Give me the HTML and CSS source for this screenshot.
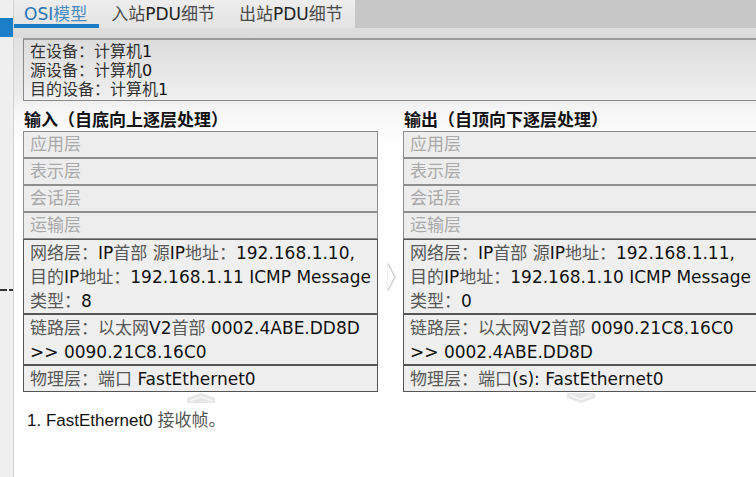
FILE: index.html
```html
<!DOCTYPE html>
<html lang="zh-CN">
<head>
<meta charset="utf-8">
<title>OSI模型</title>
<link rel="stylesheet" href="styles.css">
</head>
<body>
<div class="screen">
  <aside class="rail">
    <div class="rail-tab"></div>
    <div class="rail-dash"></div>
  </aside>
  <main class="win">
    <nav class="tabs">
      <div class="tab-group">
        <div class="tab active">OSI<span class="tc">模型</span></div>
        <div class="tab"><span class="tg">入站</span>PDU<span class="tg">细节</span></div>
        <div class="tab"><span class="tg">出站</span>PDU<span class="tg">细节</span></div>
      </div>
      <div class="tabs-rest"></div>
    </nav>
    <div class="strip"></div>
    <div class="content">
      <div class="info">
        <div><span class="ic">在设备：计算机</span>1</div>
        <div><span class="ic">源设备：计算机</span>0</div>
        <div><span class="ic">目的设备：计算机</span>1</div>
      </div>
      <div class="cols">
        <section class="col">
          <h2 class="col-title">输入（自底向上逐层处理）</h2>
          <div class="layer dim">应用层</div>
          <div class="layer dim">表示层</div>
          <div class="layer dim">会话层</div>
          <div class="layer dim">运输层</div>
          <div class="layer"><span class="c">网络层：</span>IP<span class="c">首部 源</span>IP<span class="c">地址：</span>192.168.1.10,<br><span class="c">目的</span>IP<span class="c">地址：</span>192.168.1.11 ICMP Message<br><span class="c">类型：</span>8</div>
          <div class="layer"><span class="c">链路层：以太网</span>V2<span class="c">首部</span> 0002.4ABE.DD8D<br>&gt;&gt; 0090.21C8.16C0</div>
          <div class="layer"><span class="c">物理层：端口</span> FastEthernet0</div>
          <svg class="chev" width="28" height="10" viewBox="0 0 28 10"><path d="M0 5 L14 0 L28 5 L28 10 L0 10 Z" fill="#e6e6e6"/><path d="M3 8 L14 3.5 L25 8" fill="none" stroke="#f7f7f7" stroke-width="1.5"/></svg>
        </section>
        <div class="mid">
          <svg width="12" height="30" viewBox="0 0 12 30"><path d="M2.5 1.5 V28.5" stroke="#ededed" stroke-width="1"/><path d="M3 1.5 L10 15 L3 28.5" fill="none" stroke="#cdcdcd" stroke-width="1.4"/></svg>
        </div>
        <section class="col col-right">
          <h2 class="col-title">输出（自顶向下逐层处理）</h2>
          <div class="layer dim">应用层</div>
          <div class="layer dim">表示层</div>
          <div class="layer dim">会话层</div>
          <div class="layer dim">运输层</div>
          <div class="layer"><span class="c">网络层：</span>IP<span class="c">首部 源</span>IP<span class="c">地址：</span>192.168.1.11,<br><span class="c">目的</span>IP<span class="c">地址：</span>192.168.1.10 ICMP Message<br><span class="c">类型：</span>0</div>
          <div class="layer"><span class="c">链路层：以太网</span>V2<span class="c">首部</span> 0090.21C8.16C0<br>&gt;&gt; 0002.4ABE.DD8D</div>
          <div class="layer"><span class="c">物理层：端口</span>(s): FastEthernet0</div>
          <svg class="chev" width="28" height="10" viewBox="0 0 28 10"><path d="M0 0 H28 V5 L14 10 L0 5 Z" fill="#e6e6e6"/><path d="M3 2 L14 6.5 L25 2" fill="none" stroke="#f7f7f7" stroke-width="1.5"/></svg>
        </section>
      </div>
      <p class="steps">1. FastEthernet0 <span class="sc">接收帧。</span></p>
    </div>
  </main>
</div>
</body>
</html>
```

FILE: styles.css
```css
* { box-sizing: border-box; }
html, body { margin: 0; padding: 0; }
body {
  width: 756px;
  height: 477px;
  overflow: hidden;
  background: #ffffff;
  font-family: "DejaVu Sans", "Noto Sans CJK SC", sans-serif;
}
.screen {
  display: flex;
  width: 756px;
  height: 477px;
}
.rail {
  flex: 0 0 14px;
  background: #efefef;
  border-right: 1px solid #d3d3d3;
  display: flex;
  flex-direction: column;
  padding-top: 18px;
}
.rail-tab {
  height: 19px;
  background: #1a7fc6;
}
.rail-dash {
  margin-top: 252px;
  height: 2px;
  background: linear-gradient(90deg, #333 0 7px, transparent 7px 9px, #333 9px 13px);
}
.win {
  flex: 1;
  min-width: 0;
  overflow: hidden;
  display: flex;
  flex-direction: column;
}
.tabs {
  display: flex;
  height: 28px;
}
.tab-group {
  display: flex;
  background: linear-gradient(#ededed, #e4e4e4);
}
.tab {
  padding: 0 12px;
  font-size: 17px;
  line-height: 28px;
  color: #222;
  white-space: nowrap;
}
.tab:first-child { padding-left: 10px; }
.tab.active {
  color: #2a76b4;
  box-shadow: inset 0 -4px 0 #1a7cc4;
}
.tc { color: #4a8cc2; }
.tg { color: #4a4a4a; }
.tabs-rest {
  flex: 1;
  background: #c7c7c7;
}
.strip {
  height: 10px;
  background: linear-gradient(#dedede, #dadada);
}
.content {
  flex: 1;
  padding-left: 9px;
  background: linear-gradient(#e2e2e2 0, #ebebeb 55px, #f7f7f7 75px, #ffffff 110px);
}
.info {
  border: 1px solid #8a8a8a;
  border-top: 2px solid #9a9a9a;
  border-right: none;
  background: linear-gradient(#dcdcdc, #f0f0f0);
  padding: 2px 6px 1px;
  font-size: 16px;
  line-height: 19px;
  color: #111;
}
.ic { color: #333; }
.cols {
  display: flex;
}
.col {
  flex: 0 0 355px;
  min-width: 0;
  display: flex;
  flex-direction: column;
}
.col-right {
  flex: 1 1 auto;
}
.col-right .layer {
  border-right: none;
  overflow: hidden;
}
.col-title {
  margin: 0 0 1px;
  padding: 6px 0 0 1px;
  font: bold 17px/23px "Noto Sans CJK SC", sans-serif;
  color: #111;
}
.layer {
  border: 1px solid #555;
  background: #efefef;
  padding: 1px 0 0 6px;
  font-size: 17px;
  line-height: 24px;
  white-space: nowrap;
  color: #111;
}
.layer.dim {
  border-color: #8e8e8e;
  padding: 0 0 0 6px;
  line-height: 25px;
  color: #a9a9a9;
  background: #ededed;
}
.c { color: #585858; }
.chev {
  align-self: center;
  margin-top: 1px;
  display: block;
}
.col-right .chev {
  align-self: flex-start;
  margin-left: 164px;
}
.mid {
  flex: 0 0 25px;
  display: flex;
  justify-content: center;
  padding-top: 161px;
}
.steps {
  margin: 8px 0 0 4px;
  font: 17px/20px "Liberation Sans", "Noto Sans CJK SC", sans-serif;
  color: #111;
}
.sc { color: #555; }
```
